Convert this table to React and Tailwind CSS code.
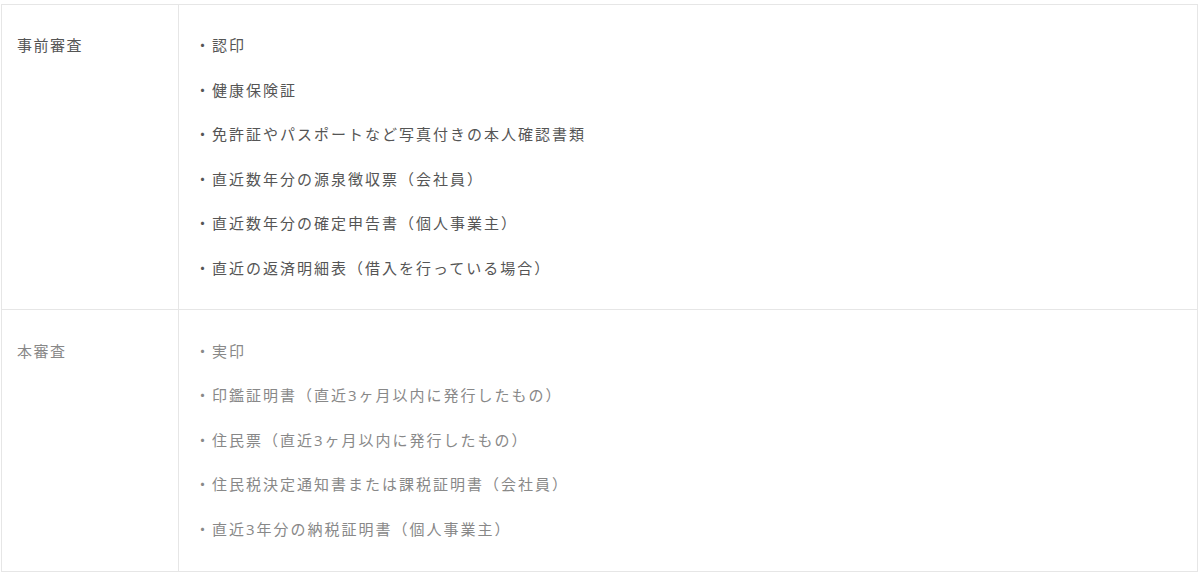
const ROWS = [
  {
    label: '事前審査',
    tone: 'text-[#555]',
    pad: 'py-[18px]',
    items: [
      '認印',
      '健康保険証',
      '免許証やパスポートなど写真付きの本人確認書類',
      '直近数年分の源泉徴収票（会社員）',
      '直近数年分の確定申告書（個人事業主）',
      '直近の返済明細表（借入を行っている場合）',
    ],
  },
  {
    label: '本審査',
    tone: 'text-[#888]',
    pad: 'pt-[19px] pb-[19px]',
    items: [
      '実印',
      '印鑑証明書（直近3ヶ月以内に発行したもの）',
      '住民票（直近3ヶ月以内に発行したもの）',
      '住民税決定通知書または課税証明書（会社員）',
      '直近3年分の納税証明書（個人事業主）',
    ],
  },
];

export default function App() {
  return (
    <div className="w-[1200px] h-[573px] bg-white pt-[4px] pl-[1px] font-['Open_Sans','Noto_Sans_CJK_JP',sans-serif] text-[15px] tracking-[2px]">
      <div className="w-[1197px] border-[1.5px] border-[#e6e6e6]">
        {ROWS.map((row, i) => (
          <div key={row.label} className={`flex ${i > 0 ? 'border-t-[1.5px] border-[#e6e6e6]' : ''}`}>
            <div className={`w-[177px] shrink-0 border-r-[1.5px] border-[#e6e6e6] pl-[15px] leading-[44.6px] tracking-[1.5px] ${row.pad} ${row.tone}`}>
              {row.label}
            </div>
            <ul className={`flex-1 pl-[16px] ${row.pad} ${row.tone}`}>
              {row.items.map((item) => (
                <li key={item} className="leading-[44.6px]">・{item}</li>
              ))}
            </ul>
          </div>
        ))}
      </div>
    </div>
  );
}
